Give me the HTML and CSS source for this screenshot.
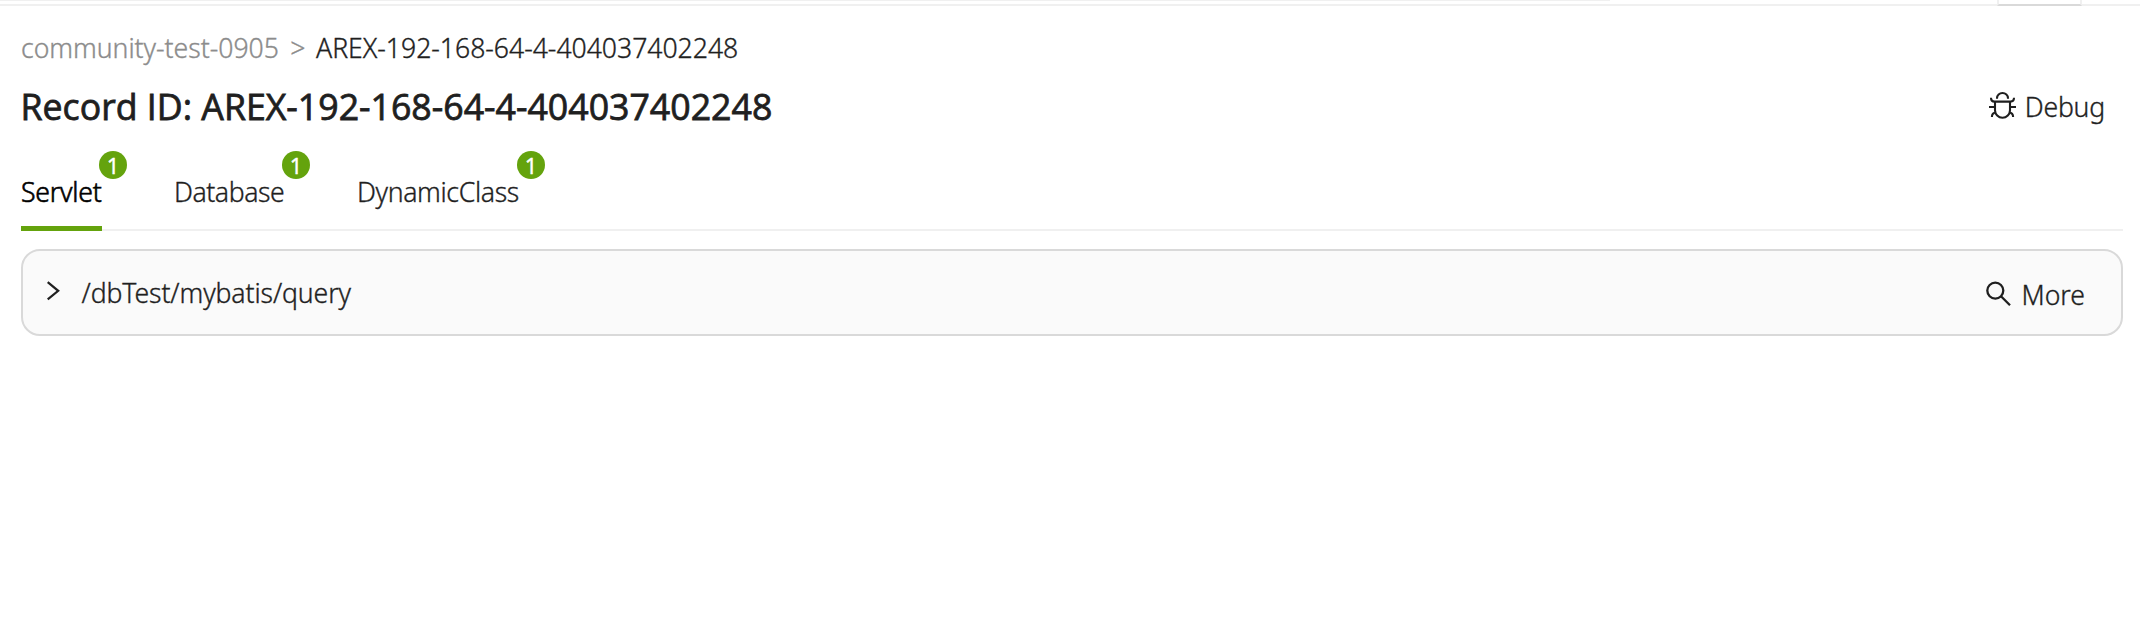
FILE: index.html
```html
<!DOCTYPE html>
<html lang="en">
<head>
<meta charset="utf-8">
<title>Record detail</title>
<link rel="stylesheet" href="styles.css">
</head>
<body>
<div class="topbar"><span class="topbar-track"></span><span class="topbar-box"></span></div>
<main class="page">
  <nav class="breadcrumb">
    <span class="crumb">community-test-0905</span>
    <span class="separator">&gt;</span>
    <span class="crumb current">AREX-192-168-64-4-404037402248</span>
  </nav>
  <header class="heading">
    <h1 class="title">Record ID: AREX-192-168-64-4-404037402248</h1>
    <a class="debug">
      <svg class="icon-bug" viewBox="0 0 27 27" fill="none" stroke="currentColor" stroke-width="2.1">
        <path d="M8 6.8V6.2a5.5 5.2 0 0 1 11 0V6.8"/>
        <path d="M2 5.8C2 8.6 3 9.6 5.6 9.6H21.4C24 9.6 25 8.6 25 5.8"/>
        <path d="M6 9.6V18.3a7.5 7.5 0 0 0 15 0V9.6"/>
        <path d="M0 15H6M21 15H27M2.9 25C2.9 22 4.3 20.6 7 20.2M24.1 25C24.1 22 22.7 20.6 20 20.2"/>
      </svg>
      <span class="debug-text">Debug</span>
    </a>
  </header>
  <div class="tabs">
    <div class="tab active"><span class="tab-text servlet">Servlet</span><span class="badge">1</span></div>
    <div class="tab"><span class="tab-text database">Database</span><span class="badge">1</span></div>
    <div class="tab"><span class="tab-text dynamic">DynamicClass</span><span class="badge">1</span></div>
  </div>
  <section class="card">
    <svg class="icon-chevron" viewBox="0 0 13 20" fill="none" stroke="currentColor" stroke-width="2.2"><path d="M.7 1.2L11.2 9.8L.7 18.4"/></svg>
    <span class="path">/dbTest/mybatis/query</span>
    <a class="more">
      <svg class="icon-search" viewBox="0 0 25 25" fill="none" stroke="currentColor" stroke-width="2.3"><circle cx="9.3" cy="9.6" r="8"/><path d="M15 15.3L24 24.2"/></svg>
      <span class="more-text">More</span>
    </a>
  </section>
</main>
</body>
</html>
```
FILE: styles.css
```css
* { box-sizing: border-box; }
body {
  margin: 0;
  background: #fff;
  color: #1f1f1f;
  font: 300 26.6px/42px "Noto Sans", "Open Sans", sans-serif;
  -webkit-text-stroke: .35px currentColor;
}
svg { display: block; flex: none; overflow: visible; }
.topbar {
  height: 6px;
  display: flex;
  border-bottom: 2px solid #f0f0f0;
}
.topbar-track { width: 1610px; height: 1px; background: #f0f0f0; }
.topbar-box {
  width: 85px;
  height: 6px;
  margin-left: 387px;
  border: solid #f0f0f0;
  border-width: 0 2px 2px;
  border-bottom-color: #d9d9d9;
}
.page { padding: 21px 17px 0 21px; }
.breadcrumb { display: flex; height: 40px; color: #8c8c8c; }
.crumb { letter-spacing: -.03px; }
.separator { margin: 0 10.5px 0 11.5px; }
.current { color: #1f1f1f; }
.heading {
  display: flex;
  justify-content: space-between;
  height: 56px;
  margin-top: 11px;
}
.title {
  margin: 0 0 0 -.5px;
  font: 500 35.7px/56px "Open Sans", sans-serif;
  -webkit-text-stroke: .8px currentColor;
}
.debug { display: flex; padding: 8px 18px 0 0; }
.icon-bug { width: 27px; height: 27px; margin: 6px 8.5px 0 0; }
.debug-text { letter-spacing: -.2px; }
.tabs {
  display: flex;
  gap: 72px;
  height: 97px;
  border-bottom: 2px solid #f0f0f0;
}
.tab { position: relative; height: 97px; padding-top: 37px; }
.active { color: #000; border-bottom: 5px solid #64a30d; }
.tab-text { display: block; white-space: nowrap; }
.servlet { width: 81px; letter-spacing: -.2px; -webkit-text-stroke: .6px #000; }
.database { width: 111px; letter-spacing: -.45px; }
.dynamic { width: 163px; letter-spacing: -.35px; }
.badge {
  position: absolute;
  top: 17px;
  right: -25px;
  width: 28px;
  height: 28px;
  border-radius: 50%;
  background: #64a30d;
  color: #fff;
  font: 400 22px/29px "Noto Sans", sans-serif;
  text-align: center;
}
.card {
  display: flex;
  height: 87px;
  margin-top: 18px;
  padding: 21px 36px 0 24px;
  border: 2px solid #d9d9d9;
  border-radius: 19px;
  background: #fafafa;
}
.icon-chevron { width: 13px; height: 20px; margin: 9px 0 0 -.5px; }
.path { margin-left: 22px; letter-spacing: -.1px; }
.more { display: flex; margin-left: auto; }
.icon-search { width: 25px; height: 25px; margin: 9px 10px 0 0; }
.more-text { padding-top: 2px; }
```
